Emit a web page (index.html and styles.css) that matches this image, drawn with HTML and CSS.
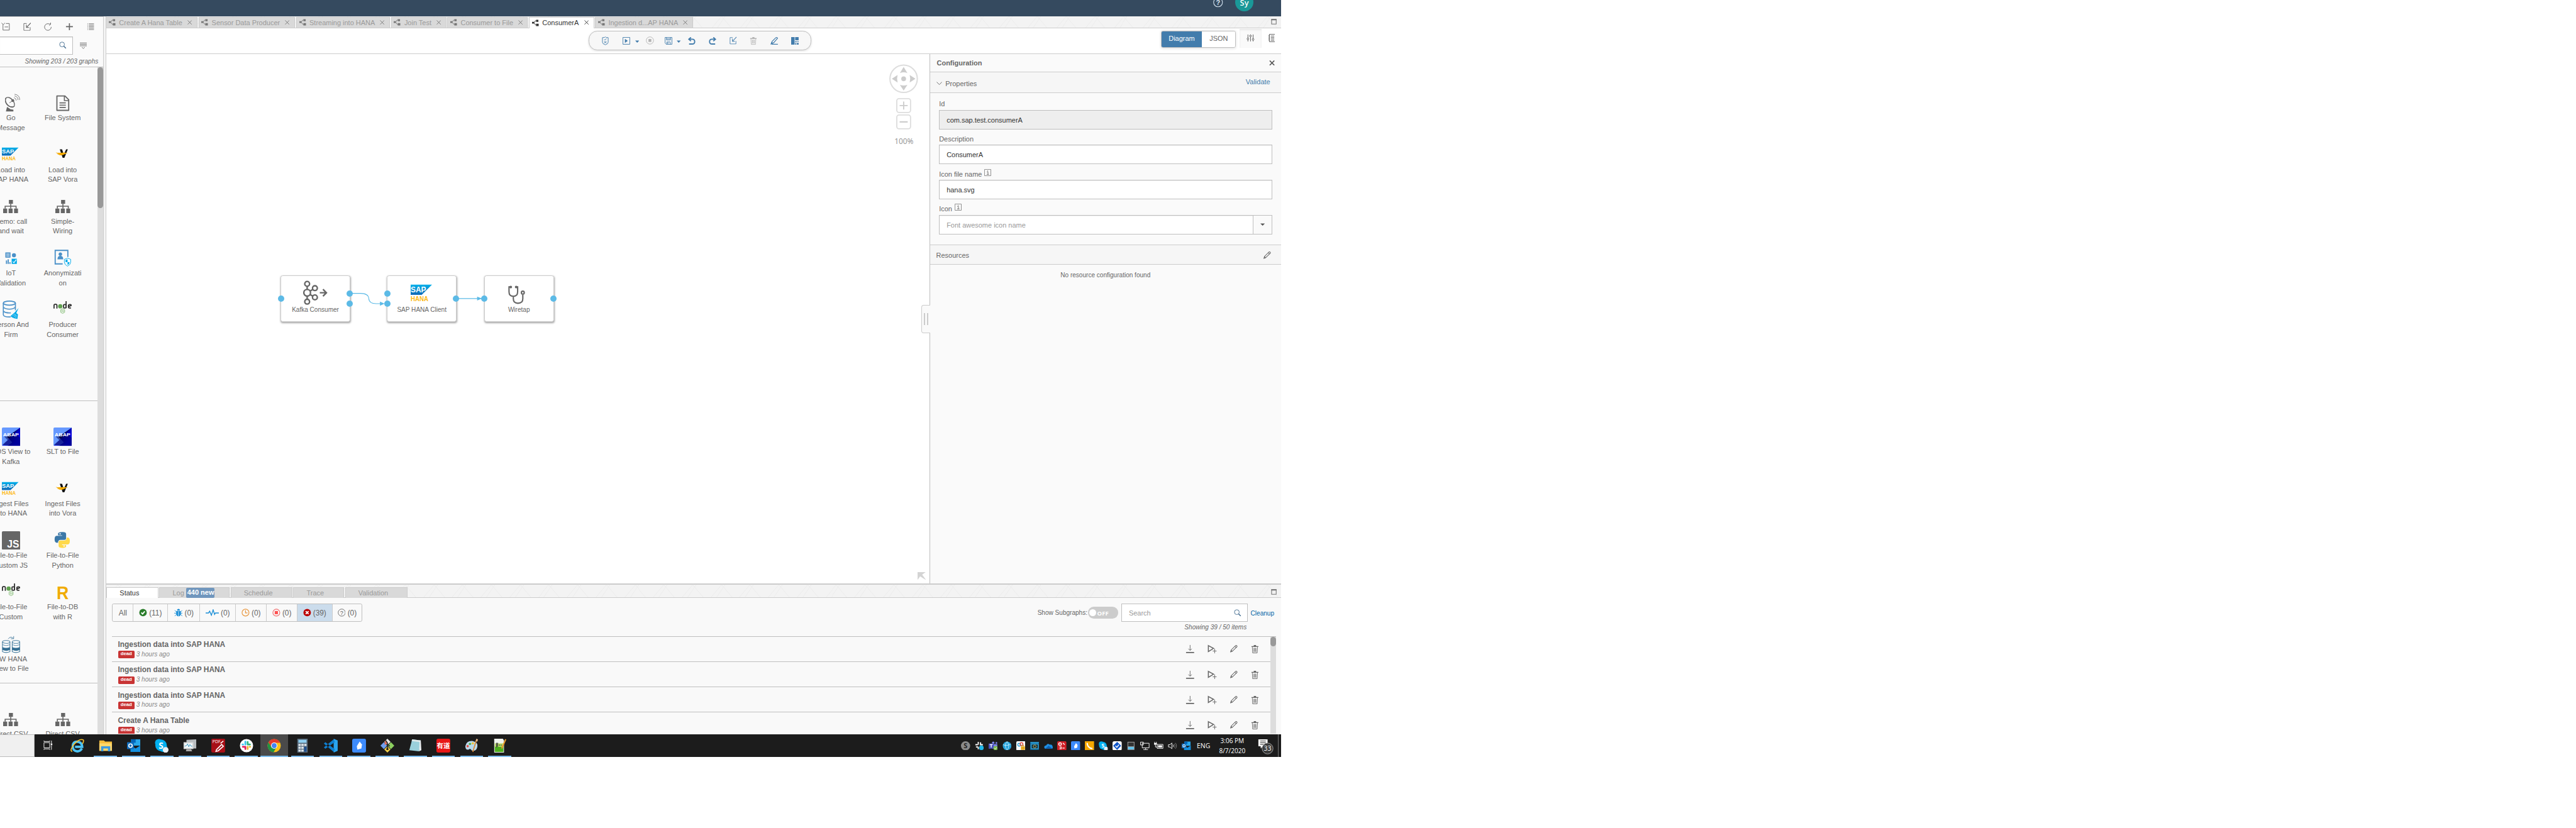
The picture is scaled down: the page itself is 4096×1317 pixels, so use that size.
FILE: index.html
```html
<!DOCTYPE html>
<html lang="en">
<head>
<meta charset="utf-8">
<title>Modeler - ConsumerA</title>
<link rel="stylesheet" href="styles.css">
</head>
<body>
<svg class="defs" width="0" height="0" aria-hidden="true">
  <defs>
    <linearGradient id="sapg" x1="0" y1="0" x2="0" y2="1"><stop offset="0" stop-color="#00b1eb"/><stop offset="1" stop-color="#1068b6"/></linearGradient>
    <linearGradient id="abapg" x1="0" y1="0" x2="1" y2="1"><stop offset=".35" stop-color="#00004a"/><stop offset=".75" stop-color="#0000ff"/></linearGradient>
    <symbol id="i-graph" viewBox="0 0 12 12"><path d="M0 4h4v3H0zM7 .5h4v3.600H7zM7 7.500h4.500v4H7z" fill="currentColor"/><path d="M7 2.200H5.800L4 5M4 6.500l2 3h1" fill="none" stroke="currentColor"/></symbol>
    <symbol id="i-x" viewBox="0 0 8 8"><path d="M.5.5l7 7M7.500.5l-7 7" fill="none" stroke="currentColor"/></symbol>
    <symbol id="i-mag" viewBox="0 0 14 14"><circle cx="5.500" cy="5.500" r="4.500" fill="none" stroke="currentColor"/><path d="M8.800 8.800l4 4" stroke="currentColor" stroke-width="1.600"/></symbol>
    <symbol id="i-tree" viewBox="0 0 26 24"><path d="M10 1h7v7h-7zM0 16h7v8H0zM9.500 16h7v8h-7zM19 16h7v8h-7z" fill="currentColor"/><path d="M13.200 8v8M3.500 16v-4h19v4" fill="none" stroke="currentColor" stroke-width="1.800"/></symbol>
    <symbol id="i-sap" viewBox="0 0 32 32"><path d="M0 4h29L15 18H0z" fill="url(#sapg)"/><text x="0" y="14.500" font-size="10.500" font-weight="bold" fill="#fff" textLength="21" lengthAdjust="spacingAndGlyphs">SAP</text><text x="0" y="26.200" font-size="9.200" font-weight="bold" fill="#fdb913" textLength="24" lengthAdjust="spacingAndGlyphs">HANA</text></symbol>
    <symbol id="i-vora" viewBox="0 0 32 32"><path d="M11 7h4l3 9 4-9h3l-6 15h-3z" fill="#111"/><path d="M4 12.500c7 2 12-1 22 1-3 0-4 1-5 1.500-3 1.500-7 3-12 2.500l3-.8c-3 0-5-1-6-2l4 .1c-3-.5-5-1-6-2.300z" fill="#f5ab00"/></symbol>
    <symbol id="i-node" viewBox="0 0 32 32"><g fill="none" stroke="#333" stroke-width="2"><path d="M1 14V8.500q0-2 2.500-2t2.500 2V14"/><rect x="17.500" y="7" width="4.500" height="6" rx="1.500"/><path d="M22 13V1M30.500 13h-3q-1.500 0-1.500-2V9q0-2 2.500-2t2.500 1.500L26 11"/></g><circle cx="11.800" cy="10" r="3.700" fill="#5fa04e"/><path d="M16 14l3.500 2v4.500L16 22.500l-3.500-2V16z" fill="#e9f3e6" stroke="#8cbf80"/><path d="M15 16v4M17.500 17v3" stroke="#8cbf80"/></symbol>
    <symbol id="i-abap" viewBox="0 0 32 32"><rect width="32" height="32" rx="2" fill="#6699ff"/><path d="M32 0v32H10l8-6-9-10z" fill="url(#abapg)"/><path d="M32 0v32H0l9-9z" fill="#0000e0" opacity=".55"/><path d="M0 30l9-8-6-6 24-3 5 5v14H16z" fill="#00004a" opacity=".5"/><path d="M0 12l10 10-10 9z" fill="#6699ff"/><text x="2" y="15.500" font-size="8.800" font-weight="bold" fill="#fff" textLength="27.500" lengthAdjust="spacingAndGlyphs">ABAP</text></symbol>
    <symbol id="i-down" viewBox="0 0 16 16"><path d="M8 1v9M5 7.500l3 3 3-3" fill="none" stroke="currentColor"/><path d="M1 13h14v2H1z" fill="currentColor"/></symbol>
    <symbol id="i-play" viewBox="0 0 16 16"><path d="M1.500 2l9 5-9 5.500z" fill="none" stroke="currentColor" stroke-width="1.700"/><path d="M12.500 7.500v8M9 11.500h7" stroke="currentColor"/></symbol>
    <symbol id="i-pen" viewBox="0 0 16 16"><path d="M2 14l1-3.500 8.500-8.500q1.500-.5 2.200.7t-.3 2L5 13zM10 3.500l2.500 2.500M3 10.500L5.500 13" fill="none" stroke="currentColor" stroke-width="1.200"/><path d="M2 14l.7-2.500 2 1.600z" fill="currentColor"/></symbol>
    <symbol id="i-bin" viewBox="0 0 14 16"><path d="M1 3h12v1.500H1zM5 1h4v2H5z" fill="currentColor"/><path d="M2.500 4.500l.6 10.300h7.800l.6-10.300M5.200 6v7M7 6v7M8.800 6v7" fill="none" stroke="currentColor"/></symbol>
    <symbol id="i-export" viewBox="0 0 14 14"><path d="M6 1.500H1v12h11V8" fill="none" stroke="currentColor"/><path d="M13 .5L6 8M5.500 3.500V8.500H10" fill="none" stroke="currentColor" stroke-width="1.200"/></symbol>
    <symbol id="i-max" viewBox="0 0 10 10"><path d="M1 1h8v8H1z" fill="none" stroke="#777" stroke-width="1.200"/><path d="M.4.400h9.200v2H.4z" fill="#777"/></symbol>
    <symbol id="i-info" viewBox="0 0 12 12"><path d="M.5.500h11v11H.5z" fill="none" stroke="#888"/><path d="M4.500 5h2v4M4.300 9.200h4M6 2.200v1.600" fill="none" stroke="#888" stroke-width="1.200"/></symbol>
    <symbol id="i-undo" viewBox="0 0 14 14"><path d="M5.500.5L1.500 4l4 3.500M2 4h6q4.500 0 4.500 4.500T8 13H2" fill="none" stroke="currentColor" stroke-width="2.200"/></symbol>
    <symbol id="i-outlook" viewBox="0 0 24 24"><path d="M7 1h16v11H7z" fill="#28a8ea"/><path d="M7 1h8v6H7z" fill="#0364b8"/><path d="M6 12l9 5 9-6v12H6z" fill="#1490df"/><rect y="6" width="12" height="12" rx="1" fill="#0f6cbd"/><circle cx="6" cy="12" r="3" fill="none" stroke="#fff" stroke-width="1.800"/></symbol>
    <symbol id="i-skype" viewBox="0 0 24 24"><circle cx="7" cy="7" r="6.500" fill="#00aff0"/><circle cx="15" cy="16" r="7" fill="#00aff0"/><circle cx="11" cy="11.500" r="10" fill="#00aff0"/><text x="11" y="17" font-size="15" font-weight="bold" fill="#fff" text-anchor="middle">S</text><circle cx="19" cy="19.500" r="5" fill="#e8eef3"/></symbol>
    <symbol id="i-tile" viewBox="0 0 24 24"><rect width="24" height="24" rx="3" fill="#3d8bfd"/><path d="M13 5l4 5-1 7-7 2-1-6z" fill="#fff"/></symbol>
  </defs>
</svg>

<div class="screen">
<div class="app">
  <header class="shell">
    <svg class="shell-help" width="17" height="17" viewBox="0 0 17 17"><circle cx="8.500" cy="8.500" r="7.700" fill="none" stroke="#d1e0ee" stroke-width="1.200"/><text x="8.500" y="12.700" font-size="12" font-weight="bold" fill="#d1e0ee" text-anchor="middle">?</text></svg>
    <span class="avatar">Sy</span>
  </header>

  <div class="workspace">
    <aside class="sidebar">
      <div class="side-tools">
        <svg width="16" height="14" viewBox="0 0 16 14"><path d="M3 3.500V13h11V1.500H8M.5.500l3 3 3-3M6 7.500h6" fill="none" stroke="currentColor"/></svg>
        <svg width="14" height="14"><use href="#i-export"/></svg>
        <svg width="14" height="14" viewBox="0 0 14 14"><path d="M12.500 7.500A5.800 5.800 0 1 1 9 2.300h2.500M11.500 0v3L9 5" fill="none" stroke="currentColor"/></svg>
        <svg width="14" height="14" viewBox="0 0 14 14"><path d="M7 1v12M1 7h12" stroke="currentColor" stroke-width="1.800"/></svg>
        <svg width="14" height="14" viewBox="0 0 14 14"><path d="M3.500 2h9M3.500 4.500h9M3.500 7h9M3.500 9.500h9M3.500 12h9" stroke="currentColor"/><path d="M1 2h1M1 4.500h1M1 7h1M1 9.500h1M1 12h1" stroke="currentColor"/></svg>
      </div>
      <div class="side-search">
        <div class="side-input"><svg width="13" height="13"><use href="#i-mag"/></svg></div>
        <svg class="side-filter" width="12" height="12" viewBox="0 0 12 12"><path d="M0 1.500h12M0 4h12M0 6.500h12" stroke="currentColor"/><path d="M3.500 9L6 11l2.500-2" fill="none" stroke="currentColor"/></svg>
      </div>
      <div class="side-count">Showing 203 / 203 graphs</div>
      <div class="side-body">
        <div class="side-list">
          <section class="cat">
            <div class="tile"><svg width="32" height="32" viewBox="0 0 32 32"><path d="M7 7c-4 8 5 19 15 15C12 26 3 17 7 7z" fill="#666" stroke="#666"/><ellipse cx="14" cy="15" rx="6" ry="10" transform="rotate(-40 14 15)" fill="none" stroke="#666" stroke-width="1.500"/><circle cx="19" cy="12" r="2.500" fill="#666"/><path d="M13 16l6-4" stroke="#666"/><path d="M7 31l2-8 6 4 5 1v3z" fill="#666"/><path d="M21 7q4 1 4 5M22 4q6 1 6 7M22 1q9 1 9 10" fill="none" stroke="#777"/></svg><span>Go<br>Message</span></div>
            <div class="tile"><svg width="32" height="32" viewBox="0 0 32 32"><path d="M6 4h14l6.500 6.500V29H6z" fill="none" stroke="#666" stroke-width="2" stroke-linejoin="round"/><path d="M19 4v8h8M10.500 16h11M10.500 20h11M10.500 24h11" fill="none" stroke="#666" stroke-width="1.800"/></svg><span>File System</span></div>
            <div class="tile"><svg width="32" height="32"><use href="#i-sap"/></svg><span>Load into<br>SAP HANA</span></div>
            <div class="tile"><svg width="32" height="32"><use href="#i-vora"/></svg><span>Load into<br>SAP Vora</span></div>
            <div class="tile"><svg class="tree" width="26" height="24"><use href="#i-tree"/></svg><span>Demo: call<br>and wait</span></div>
            <div class="tile"><svg class="tree" width="26" height="24"><use href="#i-tree"/></svg><span>Simple-<br>Wiring</span></div>
            <div class="tile"><svg width="32" height="32" viewBox="0 0 32 32"><path d="M6 6h9v9H6zM7 20h2v6H7zM10 18h2v8h-2zM13 23h2v3h-2z" fill="#4a90c8"/><path d="M7.500 8.500h6M7.500 10.500h6M7.500 12.500h6" stroke="#fff" stroke-width=".8"/><circle cx="21" cy="11" r="3.500" fill="#4a90c8"/><path d="M17 17h9v9h-9z" fill="#00a9e8"/><path d="M19 22l2 2 4-5.500" fill="none" stroke="#fff" stroke-width="1.300"/></svg><span>IoT<br>Validation</span></div>
            <div class="tile"><svg width="32" height="32" viewBox="0 0 32 32"><path d="M25 14V2.500H3V26h13" fill="none" stroke="#4a90c8" stroke-width="2"/><circle cx="12" cy="9" r="3" fill="#4a90c8"/><path d="M7 18q0-6 5-6t5 6z" fill="#4a90c8"/><path d="M24.500 16l5.500 2v5q0 4-5.500 7-5.500-3-5.500-7v-5z" fill="#fff" stroke="#00a9e8"/><path d="M24.500 18v5H21v-4zM24.500 23H28q0 3-3.500 5z" fill="#00a9e8"/></svg><span>Anonymizati<br>on</span></div>
            <div class="tile"><svg width="32" height="32" viewBox="0 0 32 32"><g fill="none" stroke="#4a90c8" stroke-width="1.800"><ellipse cx="13" cy="4.500" rx="10.500" ry="3.500"/><path d="M2.500 4.500V25q1 4 13 3.500M23.500 4.500V17M2.500 11.500q3 3.500 10.500 3.500t10.500-3.500M2.500 18.500q3 3.500 13 3"/></g><path d="M29 13l-4 9 3 2-1 8q-8-1-12-5l7-6z" fill="#00a9e8"/><path d="M18 27l5-4M21 29l3-5M24 31l1-6" stroke="#d7f0fb" stroke-width=".7"/></svg><span>Person And<br>Firm</span></div>
            <div class="tile"><svg width="32" height="32"><use href="#i-node"/></svg><span>Producer<br>Consumer</span></div>
            <div class="tile"></div><div class="tile"></div>
          </section>
          <section class="cat">
            <div class="tile"><svg width="32" height="32"><use href="#i-abap"/></svg><span>CDS View to<br>Kafka</span></div>
            <div class="tile"><svg width="32" height="32"><use href="#i-abap"/></svg><span>SLT to File</span></div>
            <div class="tile"><svg width="32" height="32"><use href="#i-sap"/></svg><span>Ingest Files<br>into HANA</span></div>
            <div class="tile"><svg width="32" height="32"><use href="#i-vora"/></svg><span>Ingest Files<br>into Vora</span></div>
            <div class="tile"><svg width="32" height="32" viewBox="0 0 32 32"><rect width="32" height="32" rx="2" fill="#666"/><text x="9" y="28.500" font-size="18" font-weight="bold" fill="#fff" textLength="21" lengthAdjust="spacingAndGlyphs">JS</text></svg><span>File-to-File<br>Custom JS</span></div>
            <div class="tile"><svg width="32" height="32" viewBox="0 0 32 32"><path d="M15 1.500q7-.5 7 3.500v7q0 3-3 3h-7q-4 0-4 5H5q-3-1-3-6 0-6 4-6h9V7H8V4q0-2 7-2.500z" fill="#3b78a8"/><path d="M16 29q-7 0-7-3.500V19q0-3 3-3h7q4 0 4-5h2.500q3 1 3 6 0 6-4 6H15v1h7v2q0 3-6 3z" fill="#ffd94a"/><circle cx="11.500" cy="4.500" r="1.200" fill="#fff"/><circle cx="18.500" cy="25.800" r="1.200" fill="#fff"/></svg><span>File-to-File<br>Python</span></div>
            <div class="tile"><svg width="32" height="32"><use href="#i-node"/></svg><span>File-to-File<br>Custom</span></div>
            <div class="tile"><svg width="32" height="32" viewBox="0 0 32 32"><text x="5.500" y="28" font-size="32" font-weight="bold" fill="#f0ab00" textLength="21" lengthAdjust="spacingAndGlyphs">R</text></svg><span>File-to-DB<br>with R</span></div>
            <div class="tile"><svg width="32" height="32" viewBox="0 0 32 32"><g fill="#fff" stroke="#4a7fa0" stroke-width="1.200"><path d="M1 12v17q6 3 13 0V12M18 12v17q6 3 13 0V12"/><ellipse cx="7.500" cy="12" rx="6.500" ry="2.500"/><ellipse cx="24.500" cy="12" rx="6.500" ry="2.500"/></g><path d="M1 21q6 3 13 0v5q-6 3-13 0zM18 21q6 3 13 0v5q-6 3-13 0z" fill="#356f93"/><path d="M1 17q6 3 13 0M18 17q6 3 13 0M11 7q4-6 9-1M20.500 2v4.500h-5" fill="none" stroke="#4a7fa0"/></svg><span>BW HANA<br>View to File</span></div>
            <div class="tile"></div>
          </section>
          <section class="cat">
            <div class="tile"><svg class="tree" width="26" height="24"><use href="#i-tree"/></svg><span>Direct CSV</span></div>
            <div class="tile"><svg class="tree" width="26" height="24"><use href="#i-tree"/></svg><span>Direct CSV</span></div>
          </section>
        </div>
        <div class="side-scroll"><i></i></div>
      </div>
    </aside>
    <div class="splitter"></div>

    <main class="main">
      <nav class="tabs">
        <div class="tab w1"><svg width="12" height="12"><use href="#i-graph"/></svg><span>Create A Hana Table</span><svg width="8" height="8"><use href="#i-x"/></svg></div>
        <div class="tab w2"><svg width="12" height="12"><use href="#i-graph"/></svg><span>Sensor Data Producer</span><svg width="8" height="8"><use href="#i-x"/></svg></div>
        <div class="tab w3"><svg width="12" height="12"><use href="#i-graph"/></svg><span>Streaming into HANA</span><svg width="8" height="8"><use href="#i-x"/></svg></div>
        <div class="tab w4"><svg width="12" height="12"><use href="#i-graph"/></svg><span>Join Test</span><svg width="8" height="8"><use href="#i-x"/></svg></div>
        <div class="tab w5"><svg width="12" height="12"><use href="#i-graph"/></svg><span>Consumer to File</span><svg width="8" height="8"><use href="#i-x"/></svg></div>
        <div class="tab w6 on"><svg width="12" height="12"><use href="#i-graph"/></svg><span>ConsumerA</span><svg width="8" height="8"><use href="#i-x"/></svg></div>
        <div class="tab w7"><svg width="12" height="12"><use href="#i-graph"/></svg><span>Ingestion d...AP HANA</span><svg width="8" height="8"><use href="#i-x"/></svg></div>
        <svg class="max" width="10" height="10"><use href="#i-max"/></svg>
      </nav>

      <div class="toolbar">
        <div class="pill">
          <svg class="t1" width="12" height="15" viewBox="0 0 12 15"><path d="M1 2q5 0 5-1.500Q6 2 11 2v8q0 3-5 4.500-5-1.500-5-4.500z" fill="none" stroke="currentColor"/><path d="M4 5l1.500 1.500L8 3.500M4 8.500l4 3M8 8.500l-4 3" fill="none" stroke="currentColor"/></svg>
          <svg class="t2" width="13" height="13" viewBox="0 0 13 13"><path d="M.5.500h12v12H.5z" fill="none" stroke="currentColor"/><path d="M4 3l5 3.500-5 3.500z" fill="currentColor"/></svg>
          <svg class="t3" width="7" height="5" viewBox="0 0 7 5"><path d="M0 .5h7L3.500 4.500z" fill="currentColor"/></svg>
          <svg class="t4 off" width="14" height="14" viewBox="0 0 14 14"><circle cx="7" cy="7" r="6.300" fill="none" stroke="currentColor"/><rect x="4.500" y="4.500" width="5" height="5" fill="currentColor"/></svg>
          <svg class="t5" width="13" height="13" viewBox="0 0 13 13"><path d="M.5.500h12v12h-10l-2-2zM3 .5V5h7V.5M3.500 12.500v-4h6v4M5.500 9v3M3 3h7" fill="none" stroke="currentColor"/></svg>
          <svg class="t6" width="7" height="5" viewBox="0 0 7 5"><path d="M0 .5h7L3.500 4.500z" fill="currentColor"/></svg>
          <svg class="t7" width="13" height="13"><use href="#i-undo"/></svg>
          <svg class="t8 flip" width="13" height="13"><use href="#i-undo"/></svg>
          <svg class="t9" width="13" height="14"><use href="#i-export"/></svg>
          <svg class="t10 off" width="13" height="15"><use href="#i-bin"/></svg>
          <svg class="t11" width="13" height="13" viewBox="0 0 13 13"><path d="M2 12.500h11" stroke="currentColor" stroke-width="1.400"/><path d="M1.500 11.500l1.500-4L9.500 1q2-1 3 1L5.500 10z" fill="none" stroke="currentColor" stroke-width="1.300"/><path d="M0 13l2-4.500 3.500 2z" fill="currentColor"/></svg>
          <svg class="t12" width="13" height="13" viewBox="0 0 13 13"><path d="M0 0h6v13H0zM7 0h6v5.500H7zM7 7h2.500v2H7zM10.500 7H13v1.500h-2.500zM7 10.500h2V13H7zM10 10h3v3h-3z" fill="currentColor"/></svg>
        </div>
        <div class="seg"><span class="on">Diagram</span><span>JSON</span></div>
        <div class="cfg-btn"><svg width="14" height="14" viewBox="0 0 14 14"><g fill="none" stroke="#555"><path d="M2.500 1v6M2.500 10v3M7 1v1M7 5v8M11.500 1v7M11.500 11v2"/><circle cx="2.500" cy="8.500" r="1.500"/><circle cx="7" cy="3.500" r="1.500"/><circle cx="11.500" cy="9.500" r="1.500"/></g></svg></div>
        <svg class="doc-btn" width="12" height="14" viewBox="0 0 12 14"><path d="M1.500.5h10v13h-10zM0 3h2M0 5.500h2M0 8h2M0 10.500h2M4 3.500h6M4 6h6M4 8.500h6M4 11h6" fill="none" stroke="#555"/></svg>
      </div>

      <div class="editor">
        <div class="canvas">
          <svg class="links" width="660" height="520" viewBox="0 0 660 520" fill="none" stroke="#5cbae6" stroke-width="1.200"><path d="M424 416.300h18q14 0 14.500 9t13 9h12M609 425.300h45"/><path d="M476 430.800l8 3.500-8 3.500zM645 421.800l8 3.500-8 3.500z" fill="#5cbae6" stroke="none"/></svg>
          <div class="node n1">
            <svg width="42" height="43" viewBox="0 0 42 43"><g fill="none" stroke="#666" stroke-width="2.600"><circle cx="7" cy="6" r="4.200"/><circle cx="7" cy="21.500" r="5.800"/><circle cx="7" cy="37" r="4.200"/><circle cx="20.500" cy="13.500" r="4.200"/><circle cx="20.500" cy="29.500" r="4.200"/><path d="M7 10v6M7 27v6M12 18.500l5-3M12 24.500l5 3M29 21.500h11M34.500 15.500l6 6-6 6"/></g></svg>
            <span>Kafka Consumer</span><i class="port l m"></i><i class="port r u"></i><i class="port r d"></i>
          </div>
          <div class="node n2">
            <svg width="41" height="41"><use href="#i-sap"/></svg>
            <span>SAP HANA Client</span><i class="port l u"></i><i class="port l d"></i><i class="port r m"></i>
          </div>
          <div class="node n3">
            <svg width="29" height="32" viewBox="0 0 29 32"><g fill="none" stroke="#666" stroke-width="2.300"><path d="M4 2.500H1.500V11q0 8 7.500 8t7.500-8V2.500H14M9 19v4q0 8 8 8 8.500 0 8.500-8v-7"/><circle cx="25.500" cy="12.500" r="2.500"/></g><circle cx="4.500" cy="2.800" r="2.300" fill="#666"/><circle cx="14" cy="2.800" r="2.300" fill="#666"/></svg>
            <span>Wiretap</span><i class="port l m"></i><i class="port r m"></i>
          </div>
          <div class="zoomer">
            <svg width="50" height="51" viewBox="0 0 50 51"><circle cx="25" cy="25.500" r="23.800" fill="#fff" stroke="#ddd" stroke-width="2.200"/><circle cx="25" cy="25.500" r="4.200" fill="#ccc"/><path d="M25 5l6.500 10.500Q25 13 18.500 15.500zM25 46l-6.500-10q6.500 2.500 13 0zM4.500 25.500l10-6.500q-2 6.500 0 13zM45.500 25.500l-10-6.500q2 6.500 0 13z" fill="#ccc"/></svg>
            <svg class="zb" width="26" height="26" viewBox="0 0 26 26"><rect x="1" y="1" width="24" height="24" rx="4" fill="#fff" stroke="#ddd" stroke-width="2"/><path d="M13 6v14M6 13h14" stroke="#ccc" stroke-width="2"/></svg>
            <svg class="zc" width="26" height="26" viewBox="0 0 26 26"><rect x="1" y="1" width="24" height="24" rx="4" fill="#fff" stroke="#ddd" stroke-width="2"/><path d="M6 13h14" stroke="#ccc" stroke-width="2.400"/></svg>
            <span>100%</span>
          </div>
          <svg class="corner" width="15" height="14" viewBox="0 0 15 14"><path d="M0 0h14L8 4.500 15 14 4.500 7.500 0 13.500z" fill="#d4d4d4"/></svg>
          <div class="grip"><i></i><i></i></div>
        </div>

        <aside class="config">
          <div class="cfg-head"><b>Configuration</b><svg width="10" height="9" viewBox="0 0 10 9"><path d="M1 .5l8 8M9 .5l-8 8" stroke="#555" stroke-width="1.800"/></svg></div>
          <div class="cfg-sec props"><svg width="10" height="6" viewBox="0 0 10 6"><path d="M.5.500L5 5 9.500.5" fill="none" stroke="#666"/></svg><span>Properties</span><a>Validate</a></div>
          <div class="form">
            <label>Id</label><div class="input ro">com.sap.test.consumerA</div>
            <label>Description</label><div class="input">ConsumerA</div>
            <label>Icon file name<svg width="12" height="12"><use href="#i-info"/></svg></label><div class="input">hana.svg</div>
            <label>Icon<svg width="12" height="12"><use href="#i-info"/></svg></label>
            <div class="input combo"><span>Font awesome icon name</span><b><svg width="8" height="5" viewBox="0 0 8 5"><path d="M0 .5h8l-4 4z" fill="#555"/></svg></b></div>
          </div>
          <div class="cfg-sec res"><span>Resources</span><svg width="15" height="15"><use href="#i-pen"/></svg></div>
          <p class="none">No resource configuration found</p>
        </aside>
      </div>

      <nav class="tabs low">
        <div class="tab b1 on">Status</div>
        <div class="tab b2">Log<b>440 new</b></div>
        <div class="tab b3">Schedule</div>
        <div class="tab b4">Trace</div>
        <div class="tab b5">Validation</div>
        <svg class="max" width="10" height="10"><use href="#i-max"/></svg>
      </nav>

      <section class="status">
        <div class="status-bar">
          <div class="filters">
            <span class="f1">All</span>
            <span class="f2"><svg width="14" height="14" viewBox="0 0 14 14"><circle cx="7" cy="7" r="6.500" fill="#2b7d2b"/><path d="M4 7l2.300 2.500L10 4.800" fill="none" stroke="#fff" stroke-width="2"/></svg>(11)</span>
            <span class="f3"><svg width="15" height="14" viewBox="0 0 15 14"><path d="M5 3.500q0-3 2.500-3t2.500 3zM3.500 4.500h8v6q-1 3-4 3t-4-3z" fill="#1c8fd6"/><path d="M0 8h15M1 3l3 3M14 3l-3 3M1 13l3-3M14 13l-3-3" stroke="#1c8fd6"/><path d="M7.500 5v8" stroke="#fff" stroke-width=".8"/></svg>(0)</span>
            <span class="f4"><svg width="23" height="12" viewBox="0 0 23 12"><path d="M0 6.500h5l2-3 3 7L13 1l2.500 8 1.500-2.500h6" fill="none" stroke="#1c8fd6" stroke-width="1.500"/></svg>(0)</span>
            <span class="f5"><svg width="14" height="14" viewBox="0 0 14 14"><circle cx="7" cy="7" r="6" fill="none" stroke="#e9973e" stroke-width="1.300"/><path d="M7 3v4.500h3.500" fill="none" stroke="#e9973e" stroke-width="1.300"/></svg>(0)</span>
            <span class="f6"><svg width="14" height="14" viewBox="0 0 14 14"><circle cx="7" cy="7" r="6" fill="none" stroke="#f06a6a" stroke-width="1.200"/><rect x="4.200" y="4.200" width="5.600" height="5.600" fill="#ff5151"/></svg>(0)</span>
            <span class="f7 on"><svg width="14" height="14" viewBox="0 0 14 14"><circle cx="7" cy="7" r="6.500" fill="#b00"/><path d="M4.500 4.500l5 5M9.500 4.500l-5 5" stroke="#fff" stroke-width="2"/></svg>(39)</span>
            <span class="f8"><svg width="14" height="14" viewBox="0 0 14 14"><circle cx="7" cy="7" r="6.200" fill="none" stroke="#666"/><text x="7" y="10.700" font-size="10" fill="#555" text-anchor="middle">?</text></svg>(0)</span>
          </div>
          <div class="status-tools">
            <span class="sub">Show Subgraphs:</span>
            <span class="switch"><i></i>OFF</span>
            <div class="find"><div class="find-box">Search<svg width="13" height="13"><use href="#i-mag"/></svg></div><em>Showing 39 / 50 items</em></div>
            <a>Cleanup</a>
          </div>
        </div>
        <div class="runs">
          <div class="rows">
            <div class="row"><div><b>Ingestion data into SAP HANA</b><p><mark>dead</mark><em>3 hours ago</em></p></div><div class="acts"><svg width="16" height="16"><use href="#i-down"/></svg><svg width="16" height="16"><use href="#i-play"/></svg><svg width="15" height="15"><use href="#i-pen"/></svg><svg width="14" height="16"><use href="#i-bin"/></svg></div></div>
            <div class="row"><div><b>Ingestion data into SAP HANA</b><p><mark>dead</mark><em>3 hours ago</em></p></div><div class="acts"><svg width="16" height="16"><use href="#i-down"/></svg><svg width="16" height="16"><use href="#i-play"/></svg><svg width="15" height="15"><use href="#i-pen"/></svg><svg width="14" height="16"><use href="#i-bin"/></svg></div></div>
            <div class="row"><div><b>Ingestion data into SAP HANA</b><p><mark>dead</mark><em>3 hours ago</em></p></div><div class="acts"><svg width="16" height="16"><use href="#i-down"/></svg><svg width="16" height="16"><use href="#i-play"/></svg><svg width="15" height="15"><use href="#i-pen"/></svg><svg width="14" height="16"><use href="#i-bin"/></svg></div></div>
            <div class="row"><div><b>Create A Hana Table</b><p><mark>dead</mark><em>3 hours ago</em></p></div><div class="acts"><svg width="16" height="16"><use href="#i-down"/></svg><svg width="16" height="16"><use href="#i-play"/></svg><svg width="15" height="15"><use href="#i-pen"/></svg><svg width="14" height="16"><use href="#i-bin"/></svg></div></div>
          </div>
          <div class="run-scroll"><i></i></div>
        </div>
      </section>
    </main>
  </div>

  <footer class="taskbar">
    <div class="winsearch"></div>
    <div class="pins">
      <span class="pin plain"><svg width="16" height="16" viewBox="0 0 16 16"><path d="M1 3.500h10v9H1zM1 0v1.500h10V0M1 16v-1.500h10V16M14 0v5M14 8.500V16" fill="none" stroke="#fff"/><path d="M13 5h2.500v3H13z" fill="#fff"/></svg></span>
      <span class="pin plain ie"><svg width="24" height="24" viewBox="0 0 24 24"><path d="M20 17q-3 5-8 5-8-1-8-9t8-8q8 1 8.500 9H8" fill="none" stroke="#4cc4f5" stroke-width="4"/><path d="M3 22Q-2 21 6 10 16-1 22 2q2 1-1 7" fill="none" stroke="#f9c22e" stroke-width="1.800"/></svg></span>
      <span class="pin"><svg width="24" height="24" viewBox="0 0 24 24"><path d="M1 3h8l2 2h12v16H1z" fill="#f5bd3c"/><path d="M1 8h22v13H1z" fill="#ffd76b"/><path d="M4 22v-9h16v9h-4v-5H8v5z" fill="#3c9ae0"/></svg></span>
      <span class="pin"><svg width="24" height="24"><use href="#i-outlook"/></svg></span>
      <span class="pin"><svg width="24" height="24"><use href="#i-skype"/></svg></span>
      <span class="pin"><svg width="24" height="24" viewBox="0 0 24 24"><path d="M6 2l17-1v16H6z" fill="#b9bdc0"/><path d="M1 6h17v12H1z" fill="#d8dadb"/><path d="M3 8h13v8H3z" fill="#f6fafc"/><path d="M3 13l3-1 2-3 2 5 2-4 2 3h2" fill="none" stroke="#2a8dbb"/><path d="M6 18h8l2 4H5z" fill="#aaa"/></svg></span>
      <span class="pin"><svg width="24" height="24" viewBox="0 0 24 24"><rect width="24" height="24" rx="2" fill="#a80f17"/><text x="2" y="8" font-size="7.500" fill="#fff">PDF</text><path d="M9 19l9-9 3 3-9 8-4 1zM16 8l5-4" fill="none" stroke="#fff" stroke-width="1.700"/></svg></span>
      <span class="pin"><svg width="24" height="24" viewBox="0 0 24 24"><circle cx="12" cy="12" r="11.500" fill="#fff"/><g stroke-width="3" stroke-linecap="round"><path d="M10 5v5M5 10h1" stroke="#36c5f0"/><path d="M14 5.500v4M18 10h-4" stroke="#2eb67d"/><path d="M14 14v4M18.500 14h-1" stroke="#ecb22e"/><path d="M10 14v4M5.500 14H10" stroke="#e01e5a"/></g></svg></span>
      <span class="pin active"><svg width="24" height="24" viewBox="0 0 24 24"><circle cx="12" cy="12" r="11.500" fill="#fbc116"/><path d="M2 6.300A11.500 11.500 0 0 1 22.300 7H12v5l-4.500 3z" fill="#e33b2e"/><path d="M2 6.300A11.500 11.500 0 0 0 11 23.500l5-9-8.500.5z" fill="#229342"/><circle cx="12" cy="12" r="5.500" fill="#fff"/><circle cx="12" cy="12" r="4.300" fill="#4285f4"/></svg></span>
      <span class="pin"><svg width="24" height="24" viewBox="0 0 24 24"><path d="M3 0h18v24H3z" fill="#5c6f80"/><path d="M5 2h14v5H5z" fill="#8fd0f2"/><path d="M5 9h4v3.500H5zM10 9h4v3.500h-4zM15 9h4v3.500h-4zM5 14h4v3.500H5zM10 14h4v3.500h-4zM5 19h4v3.500H5zM10 19h4v3.500h-4z" fill="#dfe6eb"/><path d="M15 14h4v8.500h-4z" fill="#1d4f91"/></svg></span>
      <span class="pin"><svg width="24" height="24" viewBox="0 0 24 24"><path d="M17 0l7 3v18l-7 3z" fill="#2aa5f0"/><path d="M17 1L0 15l2.500 2.500L19 6zM17 23L0 8.500 2.500 6 19 18z" fill="#0f7fd0"/></svg></span>
      <span class="pin"><svg width="24" height="24"><use href="#i-tile"/></svg></span>
      <span class="pin"><svg width="24" height="24" viewBox="0 0 24 24"><path d="M12 0l5.500 5.500L12 11 6.500 5.500z" fill="#e8e8e8"/><path d="M5.800 6l5.700 6-5.700 6L0 12z" fill="#6f9ff0"/><path d="M18.200 6l5.800 6-5.800 6-5.700-6z" fill="#8ccf5f"/><path d="M12 13l5.500 5.500L12 24l-5.500-5.500z" fill="#f3d14a"/><path d="M8 3l3 3v3l-4 2z" fill="#e26c5c"/><path d="M9 3l3 4v12M12 9l4 4" fill="none" stroke="#222" stroke-width="1.700"/><circle cx="12" cy="18" r="2" fill="#222"/></svg></span>
      <span class="pin"><svg width="24" height="24" viewBox="0 0 24 24"><path d="M7 1l15 2-3 19-17-2z" fill="#9ad0dc"/><path d="M7 1l15 2-.5 3L6 4z" fill="#dfe9ea"/><path d="M20 3l2 0 1 17-4 2z" fill="#e9eef0"/></svg></span>
      <span class="pin"><svg width="24" height="24" viewBox="0 0 24 24"><rect width="24" height="24" rx="3" fill="#e81717"/><text x="12" y="16.500" font-size="11.500" font-weight="bold" fill="#fff" text-anchor="middle" class="cjk">有道</text></svg></span>
      <span class="pin"><svg width="24" height="24" viewBox="0 0 24 24"><path d="M1 13Q3 3 14 4q9 2 8 9-1 8-7 8-3 0-5-3-2-1-3 1-6 1-6-6z" fill="#b9d9ec"/><circle cx="5" cy="13" r="2" fill="#e34b3d"/><circle cx="9" cy="9" r="2" fill="#4bae4b"/><circle cx="14" cy="8" r="2" fill="#f2c233"/><path d="M20 3l-6 20" stroke="#d98b3a" stroke-width="2"/><path d="M19 4l1-4 3 1-1 4z" fill="#e5b98a"/></svg></span>
      <span class="pin"><svg width="24" height="24" viewBox="0 0 24 24"><path d="M2 0h15l2 3v21H2z" fill="#f1f4ee"/><path d="M3 12h15v11H3z" fill="#4cae1b"/><path d="M3 8h15v6H3z" fill="#bde06d"/><path d="M6 7v8M8 7v7M10 11h2M13 11h2" stroke="#333" stroke-width="1.400"/><path d="M22 1l-7 16" stroke="#e69a2d" stroke-width="2.400"/></svg></span>
    </div>
    <div class="tray">
      <svg width="16" height="16" viewBox="0 0 16 16"><circle cx="8" cy="8" r="8" fill="#8a8a8a"/><text x="8" y="12.500" font-size="12" font-weight="bold" fill="#222" text-anchor="middle">S</text></svg>
      <svg width="16" height="16" viewBox="0 0 16 16"><path d="M6 1v5M1 6h4M10 2v5M10 6h4M6 10v4M2 10h4" stroke="#fff" stroke-width="2"/><circle cx="11.500" cy="11.500" r="4" fill="#1fb6e9"/></svg>
      <svg width="16" height="16" viewBox="0 0 16 16"><path d="M7 5h8v8H7z" fill="#7b83eb"/><circle cx="8" cy="2.500" r="2" fill="#7b83eb"/><circle cx="13.500" cy="3" r="1.500" fill="#7b83eb"/><path d="M0 4h9v9H0z" fill="#4b53bc"/><path d="M2 6h5M4.500 6v5" stroke="#fff" stroke-width="1.400"/><circle cx="12" cy="12" r="3.800" fill="#7cbb4f"/><path d="M10 12l1.500 1.500L14 11" fill="none" stroke="#fff"/></svg>
      <svg width="16" height="16" viewBox="0 0 16 16"><circle cx="8" cy="8" r="7.500" fill="#25a2dc"/><path d="M1 6q7 3 13-1M8 .5q-6 7 0 15M8 .5q6 8 0 15" fill="none" stroke="#c7ecfb"/></svg>
      <svg width="16" height="16" viewBox="0 0 16 16"><rect width="16" height="16" rx="2" fill="#fff"/><circle cx="5" cy="6" r="2.500" fill="none" stroke="#2a9fd8" stroke-width="1.500"/><circle cx="9" cy="5" r="2.500" fill="none" stroke="#e2483c" stroke-width="1.500"/><path d="M8 9h7v6H8z" fill="#e5a91a"/><path d="M10 9V7h3v2" fill="none" stroke="#b87f00"/></svg>
      <svg width="16" height="16" viewBox="0 0 16 16"><path d="M0 1h16v14H0z" fill="#0c6aa0"/><path d="M1 2.500h14M2 5h12v8H2z" fill="#134" stroke="#4fc0ef"/><circle cx="8" cy="9" r="2.500" fill="none" stroke="#d6b54b"/></svg>
      <svg width="16" height="16" viewBox="0 0 16 16"><path d="M1 12q-2-4 3-5 2-4 6-1 4-1 5 3 1 3-1 4H2z" fill="#1f8fe5"/><path d="M2 13l6-5 7 5z" fill="#0f60b0"/></svg>
      <svg width="16" height="16" viewBox="0 0 16 16"><rect width="16" height="16" rx="2" fill="#d01f26"/><circle cx="5" cy="5" r="2.300" fill="none" stroke="#fff" stroke-width="1.500"/><path d="M10 3l3 3M4 10h3v3H4M9 12h4" stroke="#fff" stroke-width="1.400" fill="none"/></svg>
      <svg width="16" height="16"><use href="#i-tile"/></svg>
      <svg width="16" height="16" viewBox="0 0 16 16"><path d="M0 0h16v16H0z" fill="#f5a800"/><path d="M4 3q0 8 9 10" fill="none" stroke="#fff" stroke-width="2.400"/></svg>
      <svg width="16" height="16"><use href="#i-skype"/></svg>
      <svg width="16" height="16" viewBox="0 0 16 16"><rect width="16" height="16" rx="3" fill="#fff"/><path d="M8 1l7 7-7 7-7-7z" fill="#0f55c8"/><path d="M5 8l2.500 2.500L11 6" fill="none" stroke="#fff" stroke-width="1.500"/></svg>
      <svg width="16" height="16" viewBox="0 0 16 16"><path d="M2 1h12v14H2z" fill="#aaa"/><path d="M3 2h10v7H3z" fill="#333"/><path d="M3 10h10v4H3z" fill="#5ec4f0"/></svg>
      <svg width="16" height="16" viewBox="0 0 16 16"><path d="M3.500 3.500h12v8h-12zM9.500 11.500v3M5.500 14.500h8M.5 1.500h5v5h-5z" fill="#1c1c1c" stroke="#fff"/></svg>
      <svg width="16" height="16" viewBox="0 0 16 16"><path d="M5.500 5.500h10v7h-10z" fill="none" stroke="#fff"/><path d="M7 7h7v4H7zM0 3h5v3H0z" fill="#fff"/><path d="M1 1v2M4 1v2M2.500 6v4h3" fill="none" stroke="#fff"/></svg>
      <svg width="16" height="16" viewBox="0 0 16 16"><path d="M1 6h2.500L7 3v10L3.500 10H1z" fill="none" stroke="#fff"/><path d="M9 6q1.500 2 0 4" fill="none" stroke="#fff"/><path d="M11 4.500q3 3.500 0 7M13 3q4 5 0 10" fill="none" stroke="#888"/></svg>
      <svg width="16" height="16"><use href="#i-outlook"/></svg>
    </div>
    <span class="lang">ENG</span>
    <span class="clock">3:06 PM<br>8/7/2020</span>
    <svg class="notif" width="32" height="28" viewBox="0 0 32 28"><path d="M1 1h16v12H9l-4 4v-4H1z" fill="#fff"/><path d="M4 4h10M4 7h10M4 10h6" stroke="#1c1c1c"/><circle cx="17" cy="17" r="9.500" fill="#3a3a3a" stroke="#aaa"/><text x="17" y="21.300" font-size="11.500" fill="#fff" text-anchor="middle">33</text></svg>
    <i class="peek"></i>
  </footer>
</div>
</div>
</body>
</html>
```
FILE: styles.css
```css
* { box-sizing: border-box; }
body { margin: 0; background: #fff; overflow: hidden; font-family: "Liberation Sans", Arial, sans-serif; }
.defs { position: absolute; }
svg { display: block; flex: none; }
p { margin: 0; }

.screen { width: 4480px; height: 1440px; zoom: 0.9142857; font-size: 12px; color: #666; white-space: nowrap; }
.app { width: 2228px; height: 1317px; display: flex; flex-direction: column; overflow: hidden; }

.shell { height: 28px; flex: none; background: #354a5f; display: flex; justify-content: flex-end; padding-right: 48px; overflow: hidden; }
.shell-help { margin: -4px 21px 0 0; }
.avatar { width: 32px; height: 32px; margin-top: -12px; border-radius: 50%; background: #1a9898; color: #fff; font: 500 14px/33px "Noto Sans", sans-serif; text-align: center; }

.workspace { height: 1249px; flex: none; display: flex; overflow: hidden; }

/* Graph browser */
.sidebar { width: 181px; height: 1249px; flex: none; background: #fafafa; border-top: 1px solid #ccc; border-right: 1px solid #ccc; display: flex; flex-direction: column; overflow: hidden; }
.side-tools { height: 34px; flex: none; display: flex; align-items: center; padding-left: 2px; gap: 23px; }
.side-tools svg:first-child { margin-right: -1px; }
.side-search { display: flex; align-items: center; height: 32px; flex: none; }
.side-input { width: 127px; height: 32px; background: #fff; border: 1px solid #bfbfbf; border-left: 0; display: flex; align-items: center; justify-content: flex-end; padding-right: 10px; color: #346187; box-shadow: inset 0 1px 1px #e8e8e8; }
.side-filter { margin-left: 12px; }
.side-count { height: 21px; flex: none; font-size: 11px; font-style: italic; line-height: 25px; text-align: right; padding-right: 9px; }
.side-body { flex: 1; display: flex; min-height: 0; }
.side-list { width: 170px; flex: none; overflow: hidden; }
.side-scroll { width: 10px; background: #ddd; border-top: 1px solid #bfbfbf; }
.side-scroll i { display: block; height: 245px; background: #999; border-radius: 5px; }
.cat { border-top: 1px solid #bfbfbf; padding-top: 46px; margin-left: -26px; display: grid; grid-template-columns: 90px 90px; grid-auto-rows: 90px; margin-bottom: -6px; }
.tile { display: flex; flex-direction: column; align-items: center; text-align: center; line-height: 17px; }
.tile span { margin-top: 2px; }
.tree { margin: 4px 0; }
.splitter { width: 3px; flex: none; background: #f3f3f3; }

/* Tab strips */
.main { width: 2044px; flex: none; border-left: 1px solid #ccc; display: flex; flex-direction: column; }
.tabs { height: 21px; flex: none; display: flex; align-items: flex-start; gap: 2px; padding-top: 1px; border-bottom: 1px solid #ccc; background: #f3f3f3 url("data:image/svg+xml,%3Csvg xmlns='http://www.w3.org/2000/svg' width='50' height='24'%3E%3Cpath d='M0 24L20 0L40 24M10 24L26 0' fill='none' stroke='%23ebebeb'/%3E%3C/svg%3E"); }
.tab { height: 19px; border: 1px solid #ccc; border-bottom: 0; background: #d9d9d9; color: #999; display: flex; align-items: center; padding: 0 8px 0 4px; }
.tab span { margin-left: 6px; }
.tab svg:first-child { color: #777; }
.tab svg + span + svg { margin-left: auto; color: #777; }
.tab.on { background: #fff; color: #333; height: 20px; }
.tab.on svg { color: #333 !important; }
.w1 { width: 158px; border-left: 0; }
.w2 { width: 168px; }
.w3 { width: 163px; }
.w4 { width: 96px; }
.w5 { width: 140px; }
.w6 { width: 113px; }
.w7 { width: 170px; }
.max { margin: 4px 7px 0 auto; }
.tabs.low { height: 25px; border-top: 2.200px solid #ccc; padding-top: 4px; }
.low .tab { padding: 0 0 0 22px; }
.low .tab b { background: #7096bd; color: #fff; border-radius: 2px; height: 17px; line-height: 17px; margin-left: 4px; padding: 0 1.500px; width: 49px; text-align: center; font-size: 12px; }
.b1 { width: 90px; }
.b2 { width: 122px; }
.b3 { width: 107px; }
.b4 { width: 88px; }
.b5 { width: 109px; }
.tabs.low .max { margin-top: 4px; }

/* Editor toolbar */
.toolbar { height: 45px; flex: none; border-bottom: 1px solid #ccc; display: flex; background: #fff; }
.pill { width: 387px; height: 34px; margin: 5px 0 0 839px; border: 1px solid #bfbfbf; border-radius: 15px; background: #f7f7f7; box-shadow: 0 1px 4px #ddd; color: #427cac; display: flex; align-items: center; }
.off { color: #b3b3b3; }
.flip { transform: scaleX(-1); }
.t1 { margin-left: 22px; }
.t2 { margin-left: 24px; }
.t3 { margin: 4px 0 0 8px; }
.t4 { margin-left: 12.500px; }
.t5 { margin-left: 18.500px; }
.t6 { margin: 4px 0 0 8px; }
.t7 { margin-left: 13px; }
.t8, .t9, .t11, .t12 { margin-left: 23px; }
.t10 { margin-left: 22px; }
.seg { width: 131px; height: 29px; margin: 5px 0 0 607.500px; border: 1px solid #bfbfbf; border-radius: 3px; display: flex; line-height: 26px; text-align: center; box-shadow: 0 1px 5px #ddd; overflow: hidden; }
.seg span { flex: 1; }
.seg .on { flex: none; width: 71px; background: #427cac; color: #fff; }
.cfg-btn { width: 38px; height: 33px; margin: 1px 0 0 6px; background: #fafafa; box-shadow: inset 0 2px 3px #e6e6e6; display: flex; align-items: center; justify-content: center; }
.doc-btn { margin: 10px 0 0 12px; }

/* Diagram canvas: nodes are placed freely */
.editor { height: 921px; flex: none; display: flex; }
.canvas { width: 1431px; position: relative; background: #fff; flex: none; }
.links { position: absolute; left: 0; top: 0; }
.node { position: absolute; top: 385px; width: 121px; height: 81px; border: 1px solid #ccc; border-radius: 4px; background: #fff; box-shadow: 1px 2px 3px #aaa; display: flex; flex-direction: column; align-items: center; font-size: 11px; }
.node span { position: absolute; left: 0; right: 0; top: 53px; line-height: 13px; text-align: center; }
.n1 { left: 303px; }
.n1 svg { margin: 8px 0 0 0; }
.n2 { left: 488px; }
.n2 svg { margin: 10px 0 0 2px; }
.n3 { left: 657px; }
.n3 svg { margin: 17px 0 0 -8px; }
.port { position: absolute; width: 11px; height: 11px; border-radius: 50%; background: #5cbae6; }
.port.l { left: -6px; }
.port.r { right: -6px; }
.port.u { top: 25px; }
.port.m { top: 34px; }
.port.d { top: 43px; }
.zoomer { position: absolute; left: 1362px; top: 18px; width: 50px; display: flex; flex-direction: column; align-items: center; font: 13px/18px "Noto Sans", sans-serif; color: #999; }
.zb { margin-top: 8px; }
.zc { margin: 2px 0 11px; }
.corner { position: absolute; left: 1411px; top: 901px; }
.grip { position: absolute; left: 1417px; top: 436px; width: 16px; height: 50px; border: 1px solid #ccc; border-right: 0; border-radius: 4px 0 0 4px; background: #fafafa; display: flex; gap: 3px; align-items: center; padding-left: 4px; z-index: 1; }
.grip i { width: 2px; height: 20px; background: #ccc; }

/* Configuration panel */
.config { flex: 1; background: #fafafa; border-left: 1px solid #bfbfbf; }
.cfg-head { height: 32px; border-bottom: 1px solid #ccc; display: flex; align-items: center; justify-content: space-between; padding: 0 11px 0 12px; }
.cfg-sec { height: 36px; background: #f6f6f6; border-bottom: 1px solid #ccc; display: flex; align-items: center; padding: 4px 19px 0 11px; }
.cfg-sec a { margin: -7px 0 0 auto; color: #427cac; }
.props span { margin-left: 6px; }
.form { padding: 10px 15px 0 16px; height: 264px; }
.form label { display: flex; height: 19px; line-height: 18px; }
.form label svg { margin: 0 0 0 4px; }
.input { height: 34px; margin-bottom: 8px; background: #fff; border: 1px solid #bfbfbf; box-shadow: inset 0 1px 1px #eee; color: #333; line-height: 33px; padding-left: 12px; }
.ro { background: #eee; }
.combo { display: flex; justify-content: space-between; color: #999; }
.combo b { width: 33px; border-left: 1px solid #bfbfbf; background: #fafafa; display: flex; align-items: center; justify-content: center; }
.res { height: 35px; border-top: 1px solid #ccc; padding: 1px 17px 0 11px; justify-content: space-between; }
.none { text-align: center; font-size: 11px; line-height: 13px; margin-top: 12px; }

/* Run status */
.status { height: 237px; flex: none; background: #f9f9f9; display: flex; flex-direction: column; overflow: hidden; }
.status-bar { height: 66.500px; flex: none; display: flex; justify-content: space-between; padding: 10px 12px 0 10px; }
.filters { height: 32px; border: 1px solid #bfbfbf; border-radius: 3px; display: flex; font-size: 13px; }
.filters span { display: flex; align-items: center; justify-content: center; gap: 3.500px; border-left: 1px solid #ccc; }
.filters span:first-child { border-left: 0; }
.filters .on { background: #cbdcec; }
.f1 { width: 35px; }
.f2 { width: 60px; }
.f3 { width: 56px; }
.f4 { width: 62px; }
.f5 { width: 54px; }
.f6 { width: 53px; }
.f7 { width: 61px; }
.f8 { width: 52px; }
.status-tools { display: flex; align-items: flex-start; font-size: 11px; }
.sub { line-height: 32px; }
.switch { width: 53px; height: 21px; margin: 5px 5px 0 1px; border-radius: 10px; background: #ccc; color: #fff; font: bold 10.500px/23px "Open Sans", sans-serif; display: flex; }
.switch i { width: 12px; height: 12px; border-radius: 50%; background: #fff; margin: 4.500px 2px 0 2px; }
.find { width: 220px; }
.find-box { height: 32px; background: #fff; border: 1px solid #bfbfbf; display: flex; align-items: center; justify-content: space-between; padding: 0 10px 0 12px; font-size: 12px; color: #999; }
.find-box svg { color: #346187; }
.find em { display: block; text-align: right; line-height: 19px; padding-right: 2px; }
.status-tools a { color: #0064a6; line-height: 35px; margin-left: 5px; }
.runs { flex: 1; display: flex; margin: 0 9px 0 10px; min-height: 0; }
.rows { flex: 1; }
.row { height: 44px; border-top: 1px solid #bfbfbf; display: flex; justify-content: space-between; padding: 6px 20px 0 10px; }
.row b { display: block; font-size: 13px; line-height: 17px; }
.row p { display: flex; align-items: center; height: 15px; margin-top: 0; color: #888; font-size: 11px; }
.row mark { width: 29px; height: 13px; margin: 2px 3px 0 0; border-radius: 2px; background: #c83434; color: #fff; font-size: 8.500px; font-weight: bold; line-height: 12px; text-align: center; }
.acts { display: flex; gap: 22px; margin-top: 8px; }
.run-scroll { width: 10px; background: #ddd; border-top: 1px solid #bfbfbf; }
.run-scroll i { display: block; height: 17px; border-radius: 5px; background: #999; }

/* Windows taskbar */
.taskbar { height: 40px; flex: none; background: #1c1c1c; display: flex; align-items: center; color: #fff; position: relative; font-family: "Open Sans", "Noto Sans", sans-serif; }
.winsearch { width: 60px; height: 40px; background: #f0f0f0; border: 1px solid #bbb; border-left: 0; }
.pins { display: flex; height: 40px; }
.pin { width: 40px; height: 40px; margin-right: 9px; border-bottom: 2.200px solid #76b9ed; display: flex; align-items: center; justify-content: center; padding-top: 2px; }
.pin.plain { border-bottom-color: transparent; }
.pin:first-child { width: 48px; margin-right: 6.500px; }
.pin.ie { margin-right: 9px; }
.pin.active { background: #4a4a4a; width: 48px; margin: 0 5px 0 -4px; }
.cjk { font-family: "Noto Sans CJK SC", sans-serif; }
.tray { display: flex; gap: 8px; margin-left: auto; }
.lang { width: 44px; text-align: center; font-size: 11.500px; }
.clock { width: 56px; text-align: center; font-size: 11px; line-height: 17.500px; }
.notif { margin: 4px 4px 0 16px; }
.peek { width: 1px; height: 40px; background: #777; margin-right: 4px; }
```
